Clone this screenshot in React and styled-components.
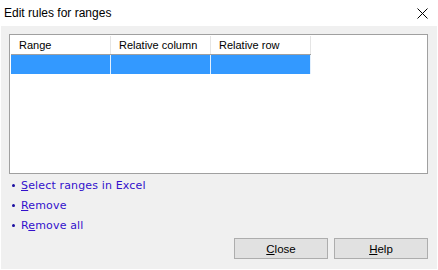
import styled, { createGlobalStyle } from "styled-components";

const GlobalStyle = createGlobalStyle`
  html, body {
    margin: 0;
    padding: 0;
    background: #ffffff;
  }
  body {
    font-family: "Liberation Sans", Arial, sans-serif;
  }
`;

const Window = styled.div`
  width: 438px;
  height: 270px;
  box-sizing: border-box;
  display: flex;
  flex-direction: column;
  background: #ffffff;
  border: 1px solid #ffffff;
  border-top: none;
`;

const TitleBar = styled.div`
  height: 26px;
  flex-shrink: 0;
  display: flex;
  align-items: center;
  justify-content: space-between;
  padding: 0 9px 0 3px;
  font-size: 12px;
  color: #000000;
`;

const Body = styled.div`
  flex: 1;
  display: flex;
  flex-direction: column;
  background: #f0f0f0;
  padding: 8px 9px 0 8px;
`;

const ListBox = styled.div`
  height: 140px;
  box-sizing: border-box;
  border: 1px solid #a0a0a0;
  background: #ffffff;
  padding: 1px;
`;

const Row = styled.div`
  display: flex;
  height: 19px;
  box-sizing: border-box;
  border-bottom: ${(p) => (p.$header ? "1px solid #a0a0a0" : "none")};
  width: 300px;
`;

const Cell = styled.div`
  width: 100px;
  box-sizing: border-box;
  padding-left: 8px;
  display: flex;
  align-items: center;
  font-size: 11px;
  color: #000000;
  background: ${(p) => (p.$selected ? "#3399ff" : "#ffffff")};
  border-right: 1px solid ${(p) => (p.$selected ? "#e3f0fd" : "#e5e5e5")};
`;

const Links = styled.ul`
  list-style: none;
  margin: 1px 0 0 0;
  padding: 0 0 0 3px;
  display: flex;
  flex-direction: column;
`;

const LinkItem = styled.li`
  height: 20px;
  display: flex;
  align-items: center;
  gap: 5px;
  font-family: "DejaVu Sans", Verdana, sans-serif;
  font-size: 11px;
  letter-spacing: 0.15px;
  color: #3311cc;
  u {
    text-decoration-thickness: 1px;
  }
`;

const Bullet = styled.span`
  width: 3px;
  height: 3px;
  border-radius: 50%;
  background: #1a0ea0;
  margin-right: 1px;
`;

const ButtonRow = styled.div`
  margin-top: auto;
  display: flex;
  justify-content: flex-end;
  gap: 6px;
  padding-bottom: 10px;
`;

const Button = styled.button`
  width: 94px;
  height: 21px;
  box-sizing: border-box;
  border: 1px solid #adadad;
  background: #e1e1e1;
  font-family: "Liberation Sans", Arial, sans-serif;
  font-size: 11.5px;
  color: #000000;
  padding: 0;
`;

const CloseIcon = () => (
  <svg width="11" height="11" viewBox="0 0 11 11">
    <path d="M0.5 0.5 L10.5 10.5 M10.5 0.5 L0.5 10.5" stroke="#000" strokeWidth="1" />
  </svg>
);

const columns = ["Range", "Relative column", "Relative row"];

export default function App() {
  return (
    <>
      <GlobalStyle />
      <Window>
        <TitleBar>
          <span>Edit rules for ranges</span>
          <CloseIcon />
        </TitleBar>
        <Body>
          <ListBox>
            <Row $header>
              {columns.map((c) => (
                <Cell key={c}>{c}</Cell>
              ))}
            </Row>
            <Row>
              {columns.map((c) => (
                <Cell key={c} $selected />
              ))}
            </Row>
          </ListBox>
          <Links>
            <LinkItem>
              <Bullet />
              <span>
                <u>S</u>elect ranges in Excel
              </span>
            </LinkItem>
            <LinkItem>
              <Bullet />
              <span>
                <u>R</u>emove
              </span>
            </LinkItem>
            <LinkItem>
              <Bullet />
              <span>
                R<u>e</u>move all
              </span>
            </LinkItem>
          </Links>
          <ButtonRow>
            <Button>
              <u>C</u>lose
            </Button>
            <Button>
              <u>H</u>elp
            </Button>
          </ButtonRow>
        </Body>
      </Window>
    </>
  );
}
